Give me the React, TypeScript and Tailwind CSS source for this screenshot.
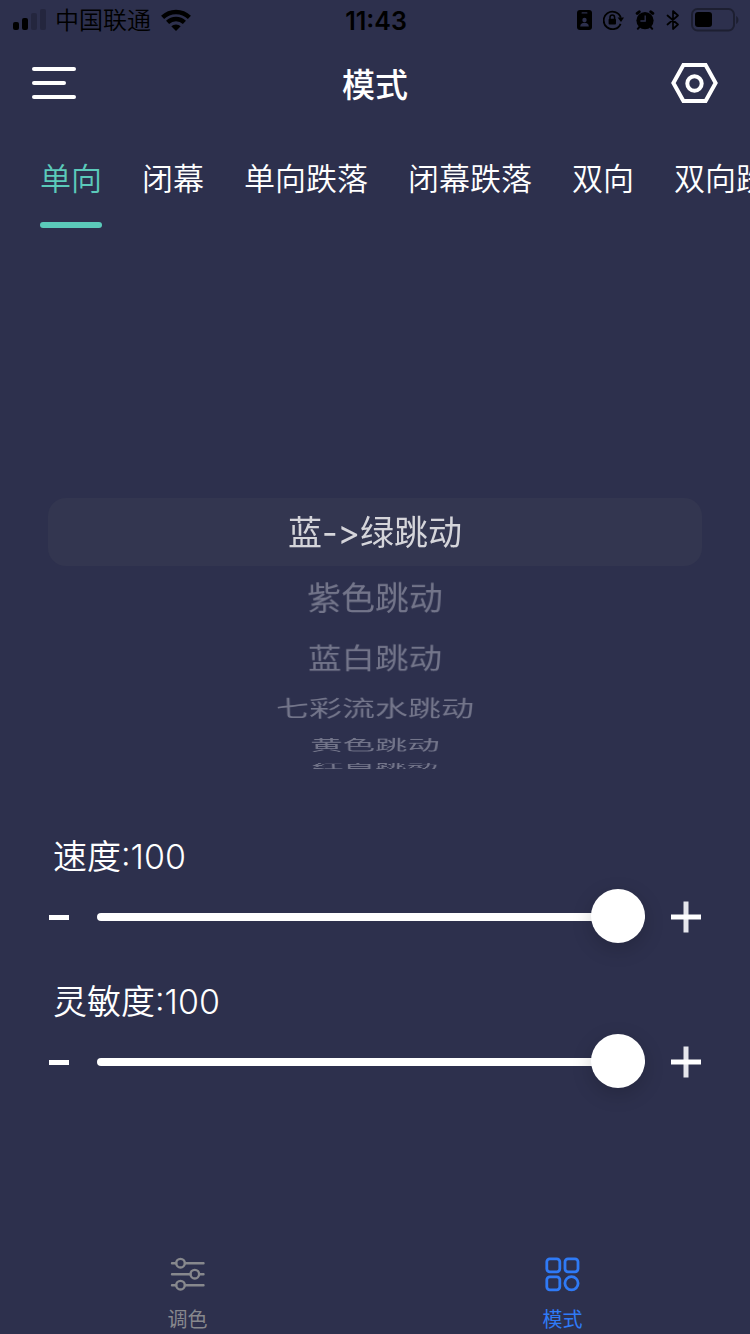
import React, { useState } from "react";

const TABS = ["单向", "闭幕", "单向跌落", "闭幕跌落", "双向", "双向跌落"];
const MODES = ["蓝->绿跳动", "紫色跳动", "蓝白跳动", "七彩流水跳动", "黄色跳动", "红白跳动"];

const WHEEL_RADIUS = 265;
const WHEEL_STEP = 14.4;

function StatusBar() {
  return (
    <div className="grid h-10 grid-cols-3 items-center pr-[11px] pl-[13px] text-black">
      <div className="flex items-center gap-2">
        <svg width="34" height="22" viewBox="0 0 34 22" aria-hidden="true">
          <rect x="0" y="13" width="6" height="8" rx="2" fill="#000" />
          <rect x="9" y="9" width="6" height="12" rx="2" fill="#000" />
          <rect x="18" y="4" width="6" height="17" rx="2" fill="#24263e" />
          <rect x="27" y="0" width="6" height="21" rx="2" fill="#24263e" />
        </svg>
        <span className="pt-0.5 text-2xl leading-8 font-[350] whitespace-nowrap">中国联通</span>
        <svg width="30" height="22" viewBox="0 0 30 22" className="ml-0.5" aria-hidden="true">
          <g fill="none" stroke="#000" strokeWidth="4.4">
            <path d="M1.6 8.4 A19.2 19.2 0 0 1 28.4 8.4" />
            <path d="M6.6 13.4 A12 12 0 0 1 23.4 13.4" />
          </g>
          <path d="M15 22 L10.3 17.3 A6.8 6.8 0 0 1 19.7 17.3 Z" fill="#000" />
        </svg>
      </div>
      <span className="pt-0.5 text-center text-[25px] leading-8 font-semibold">11:43</span>
      <div className="flex items-center justify-end gap-[11px]">
        <svg width="15" height="20" viewBox="0 0 15 20" aria-hidden="true">
          <rect width="15" height="20" rx="3" fill="#000" />
          <g fill="#2d304d">
            <rect x="4.5" y="2.2" width="6" height="1.4" rx=".7" />
            <circle cx="7.5" cy="10" r="2.2" />
            <path d="M3.2 16.5c0-2.6 1.8-3.7 4.3-3.7s4.3 1.1 4.3 3.7z" />
          </g>
        </svg>
        <svg width="21" height="20" viewBox="0 0 21 20" aria-hidden="true">
          <path d="M17.6 13.8 A8.8 8.8 0 1 1 17.8 7.6" fill="none" stroke="#000" strokeWidth="1.8" />
          <path d="M14.6 7.6 H21 L18 12 Z" fill="#000" />
          <rect x="5.6" y="8.8" width="7.4" height="5.8" rx="1" fill="#000" />
          <path d="M7 9 V7.4 a2.3 2.3 0 0 1 4.6 0 V9" fill="none" stroke="#000" strokeWidth="1.5" />
        </svg>
        <svg width="20" height="20" viewBox="0 0 20 20" aria-hidden="true">
          <circle cx="10" cy="10.6" r="8.6" fill="#000" />
          <g stroke="#000" strokeWidth="3" strokeLinecap="round">
            <path d="M2.2 3.4 L4.2 1.8" />
            <path d="M17.8 3.4 L15.8 1.8" />
            <path d="M4.4 17 L2.8 18.8" strokeWidth="2" />
            <path d="M15.6 17 L17.2 18.8" strokeWidth="2" />
          </g>
          <path d="M10.2 5.4 V11 H5.4" fill="none" stroke="#2d304d" strokeWidth="1.3" />
        </svg>
        <svg width="14" height="20" viewBox="0 0 14 20" aria-hidden="true">
          <path
            d="M1.5 5.5 L12 14.5 L7 19 V1 L12 5.5 L1.5 14.5"
            fill="none"
            stroke="#000"
            strokeWidth="1.7"
            strokeLinejoin="round"
            strokeLinecap="round"
          />
        </svg>
        <svg width="48" height="24" viewBox="0 0 48 24" aria-hidden="true">
          <rect x="1" y="1" width="42" height="21.5" rx="5.5" fill="none" stroke="#1d1f31" strokeWidth="2" />
          <rect x="4" y="4" width="17" height="15" rx="3" fill="#000" />
          <path d="M45.2 8 c3 1.6 3 6.4 0 8z" fill="#1d1f31" />
        </svg>
      </div>
    </div>
  );
}

function Header() {
  return (
    <header className="grid h-[86px] grid-cols-3 items-center px-8">
      <button type="button" aria-label="菜单" className="flex flex-col items-start gap-2.5 justify-self-start">
        <span className="h-1 w-11 rounded-full bg-white" />
        <span className="h-1 w-[34px] rounded-full bg-white" />
        <span className="h-1 w-11 rounded-full bg-white" />
      </button>
      <h1 className="pt-1 text-center text-[33px] leading-10 font-medium">模式</h1>
      <button type="button" aria-label="设置" className="justify-self-end">
        <svg width="48" height="42" viewBox="0 0 48 42" fill="none" stroke="#fff" strokeWidth="4" aria-hidden="true">
          <path d="M13.4 3 H35.6 L45.6 21 L35.6 39 H13.4 L3.4 21 Z" />
          <circle cx="24.5" cy="21.5" r="7.2" />
        </svg>
      </button>
    </header>
  );
}

function Wheel({ selected, onSelect }: { selected: number; onSelect: (i: number) => void }) {
  return (
    <div className="mx-12 mt-[63px] grid h-[482px] items-center overflow-hidden [perspective:2400px]">
      <div className="col-start-1 row-start-1 h-[68px] rounded-[18px] bg-[#333650]" />
      <div
        role="listbox"
        aria-label="模式"
        className="col-start-1 row-start-1 grid items-center [transform-style:preserve-3d]"
        style={{ transform: `translateZ(${-WHEEL_RADIUS}px)` }}
      >
        {MODES.map((mode, i) => {
          const active = i === selected;
          return (
            <button
              key={mode}
              type="button"
              role="option"
              aria-selected={active}
              onClick={() => onSelect(i)}
              className={
                "col-start-1 row-start-1 h-[68px] justify-self-center pt-0.5 text-[34px] leading-[66px] whitespace-nowrap [font-variant-ligatures:none] " +
                (active ? "text-[#d5d5da]" : "text-[#73758a]")
              }
              style={{ transform: `rotateX(${(selected - i) * WHEEL_STEP}deg) translateZ(${WHEEL_RADIUS}px)` }}
            >
              {mode}
            </button>
          );
        })}
      </div>
    </div>
  );
}

function Slider({ id, label }: { id: string; label: string }) {
  const [value, setValue] = useState(100);
  return (
    <div className="flex flex-col gap-[13px]">
      <label htmlFor={id} className="pl-1 text-[34px] leading-10 font-[350]">
        {label}:{value}
      </label>
      <div className="flex h-[54px] items-center">
        <button
          type="button"
          aria-label={label + "减"}
          onClick={() => setValue(Math.max(0, value - 1))}
          className="flex h-10 w-5 items-center"
        >
          <span className="h-[5px] w-full bg-white" />
        </button>
        <input
          id={id}
          type="range"
          min={0}
          max={100}
          value={value}
          onChange={(e) => setValue(Number(e.target.value))}
          className="mr-[26px] ml-7 h-[54px] min-w-0 flex-1 appearance-none bg-transparent [&::-webkit-slider-runnable-track]:h-2 [&::-webkit-slider-runnable-track]:rounded-full [&::-webkit-slider-runnable-track]:bg-white [&::-webkit-slider-thumb]:-mt-6 [&::-webkit-slider-thumb]:size-[54px] [&::-webkit-slider-thumb]:appearance-none [&::-webkit-slider-thumb]:rounded-full [&::-webkit-slider-thumb]:bg-white [&::-webkit-slider-thumb]:shadow-[0_6px_20px_rgba(0,0,0,0.18)]"
        />
        <button type="button" aria-label={label + "加"} onClick={() => setValue(Math.min(100, value + 1))}>
          <svg width="30" height="32" viewBox="0 0 30 32" stroke="#fff" strokeWidth="5" aria-hidden="true">
            <path d="M15 0.5 V31.5" stroke="#e6e6ec" />
            <path d="M0 16 H30" />
          </svg>
        </button>
      </div>
    </div>
  );
}

function BottomNav() {
  return (
    <nav className="mt-auto grid grid-cols-2">
      <a href="#color" className="flex flex-col items-center gap-3.5 text-[#87888d]">
        <svg width="36" height="36" viewBox="0 0 36 36" fill="none" stroke="currentColor" strokeWidth="2.4" strokeLinecap="round" aria-hidden="true">
          <path d="M2 7.2 H6.2 M15 7.2 H33.5" />
          <circle cx="10.5" cy="7.2" r="4.3" />
          <path d="M2 18.2 H20.5 M29.3 18.2 H33.5" />
          <circle cx="24.8" cy="18.2" r="4.3" />
          <path d="M2 29.2 H6.2 M15 29.2 H33.5" />
          <circle cx="10.5" cy="29.2" r="4.3" />
        </svg>
        <span className="text-xl leading-7">调色</span>
      </a>
      <a href="#mode" className="flex flex-col items-center gap-3.5 text-[#2f7af6]">
        <svg width="36" height="36" viewBox="0 0 36 36" fill="none" stroke="currentColor" strokeWidth="2.8" aria-hidden="true">
          <rect x="1.8" y="2.8" width="13" height="13" rx="3" />
          <rect x="20" y="2.8" width="13" height="13" rx="3" />
          <rect x="1.8" y="20.8" width="13" height="13" rx="3" />
          <circle cx="26.5" cy="27.3" r="6.6" />
        </svg>
        <span className="text-xl leading-7">模式</span>
      </a>
    </nav>
  );
}

export default function App() {
  const [tab, setTab] = useState(0);
  const [mode, setMode] = useState(0);
  return (
    <div className="flex min-h-screen flex-col overflow-x-hidden bg-[#2d304d] font-[Inter,'Noto_Sans_CJK_SC',sans-serif] text-white">
      <StatusBar />
      <Header />
      <div role="tablist" className="flex gap-10 overflow-x-auto pt-7 pl-10 [scrollbar-width:none]">
        {TABS.map((name, i) => (
          <button
            key={name}
            type="button"
            role="tab"
            aria-selected={i === tab}
            onClick={() => setTab(i)}
            className={
              "flex shrink-0 flex-col gap-[18px] text-[31px] leading-[50px] font-[350] whitespace-nowrap " +
              (i === tab ? "text-[#5bcaba]" : "text-white")
            }
          >
            {name}
            <span className={"h-1.5 w-full rounded-full " + (i === tab ? "bg-[#5bcaba]" : "bg-transparent")} />
          </button>
        ))}
      </div>
      <Wheel selected={mode} onSelect={setMode} />
      <div className="mt-16 mb-10 flex flex-col gap-[38px] px-[49px]">
        <Slider id="speed" label="速度" />
        <Slider id="sensitivity" label="灵敏度" />
      </div>
      <BottomNav />
    </div>
  );
}
